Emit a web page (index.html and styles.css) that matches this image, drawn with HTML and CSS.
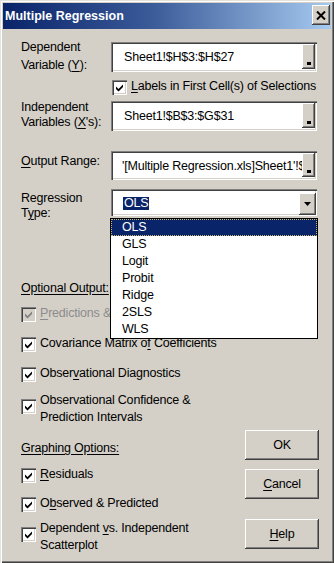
FILE: index.html
```html
<!DOCTYPE html>
<html lang="en">
<head>
    <meta charset="UTF-8">
    <meta name="viewport" content="width=device-width, initial-scale=1.0">
    <title>Multiple Regression</title>
    <link rel="stylesheet" href="styles.css">
</head>
<body>
    <div class="dialog">
        <div class="titlebar">
            <span class="title">Multiple Regression</span>
            <div class="close-btn">
                <svg width="10" height="9" viewBox="0 0 10 9"><path d="M1 0.5 L9 8.5 M9 0.5 L1 8.5" stroke="#000" stroke-width="2"/></svg>
            </div>
        </div>

        <div class="client">
            <div class="field-row row-dep">
                <div class="field-label">Dependent<br>Variable (<u>Y</u>):</div>
                <div class="refedit">
                    <span class="refedit-text">Sheet1!$H$3:$H$27</span>
                    <span class="refedit-btn"><i></i></span>
                </div>
            </div>

            <div class="check-row labels-check">
                <span class="checkbox"><svg width="7" height="8" viewBox="0 0 7 8"><polygon points="0,2.5 2.5,5 7,0.5 7,3 2.5,7.5 0,5"/></svg></span>
                <span><u>L</u>abels in First Cell(s) of Selections</span>
            </div>

            <div class="field-row row-indep">
                <div class="field-label">Independent<br>Variables (<u>X</u>'s):</div>
                <div class="refedit">
                    <span class="refedit-text">Sheet1!$B$3:$G$31</span>
                    <span class="refedit-btn"><i></i></span>
                </div>
            </div>

            <div class="field-row row-output">
                <div class="field-label"><u>O</u>utput Range:</div>
                <div class="refedit">
                    <span class="refedit-text">'[Multiple Regression.xls]Sheet1'!$B$35</span>
                    <span class="refedit-btn"><i></i></span>
                </div>
            </div>

            <div class="field-row row-type">
                <div class="field-label">Regression<br>T<u>y</u>pe:</div>
                <div class="combo">
                    <span class="combo-value">OLS</span>
                    <span class="combo-btn"><svg width="7" height="4" viewBox="0 0 7 4"><polygon points="0,0 7,0 3.5,4"/></svg></span>
                </div>
            </div>

            <div class="lower">
                <div class="options">
                    <div class="section-title">Optional Output:</div>

                    <div class="check-row disabled row-pred">
                        <span class="checkbox"><svg width="7" height="8" viewBox="0 0 7 8"><polygon points="0,2.5 2.5,5 7,0.5 7,3 2.5,7.5 0,5"/></svg></span>
                        <span><u>P</u>redictions &amp; Residuals</span>
                    </div>

                    <div class="check-row row-cov">
                        <span class="checkbox"><svg width="7" height="8" viewBox="0 0 7 8"><polygon points="0,2.5 2.5,5 7,0.5 7,3 2.5,7.5 0,5"/></svg></span>
                        <span>Covariance Matrix o<u>f</u> Coefficients</span>
                    </div>

                    <div class="check-row row-diag">
                        <span class="checkbox"><svg width="7" height="8" viewBox="0 0 7 8"><polygon points="0,2.5 2.5,5 7,0.5 7,3 2.5,7.5 0,5"/></svg></span>
                        <span>Obser<u>v</u>ational Diagnostics</span>
                    </div>

                    <div class="check-row two-line row-conf">
                        <span class="checkbox"><svg width="7" height="8" viewBox="0 0 7 8"><polygon points="0,2.5 2.5,5 7,0.5 7,3 2.5,7.5 0,5"/></svg></span>
                        <span>Observational Confidence &amp;<br>Prediction Intervals</span>
                    </div>

                    <div class="section-title row-graph">Graphing Options:</div>

                    <div class="check-row row-resid">
                        <span class="checkbox"><svg width="7" height="8" viewBox="0 0 7 8"><polygon points="0,2.5 2.5,5 7,0.5 7,3 2.5,7.5 0,5"/></svg></span>
                        <span><u>R</u>esiduals</span>
                    </div>

                    <div class="check-row row-obs">
                        <span class="checkbox"><svg width="7" height="8" viewBox="0 0 7 8"><polygon points="0,2.5 2.5,5 7,0.5 7,3 2.5,7.5 0,5"/></svg></span>
                        <span>O<u>b</u>served &amp; Predicted</span>
                    </div>

                    <div class="check-row two-line row-scatter">
                        <span class="checkbox"><svg width="7" height="8" viewBox="0 0 7 8"><polygon points="0,2.5 2.5,5 7,0.5 7,3 2.5,7.5 0,5"/></svg></span>
                        <span>Dependent <u>v</u>s. Independent<br>Scatterplot</span>
                    </div>
                </div>

                <div class="buttons">
                    <div class="btn">OK</div>
                    <div class="btn btn-cancel"><u>C</u>ancel</div>
                    <div class="btn btn-help"><u>H</u>elp</div>
                </div>
            </div>
        </div>

        <ul class="dropdown">
            <li class="selected">OLS</li>
            <li>GLS</li>
            <li>Logit</li>
            <li>Probit</li>
            <li>Ridge</li>
            <li>2SLS</li>
            <li>WLS</li>
        </ul>
    </div>
</body>
</html>
```

FILE: styles.css
```css
body {
    margin: 0;
    font-family: "Liberation Sans", Arial, sans-serif;
    font-size: 12.5px;
    letter-spacing: -0.2px;
    color: #000;
    background: #d4d0c8;
}

u {
    text-decoration: underline;
    text-underline-offset: 2px;
}

.dialog {
    position: relative;
    width: 334px;
    height: 563px;
    box-sizing: border-box;
    padding: 3px;
    background: #d4d0c8;
    box-shadow: inset 1px 1px #e4e2dc, inset 2px 2px #fff, inset -1px -1px #404040, inset -2px -2px #808080;
}

/* title bar */
.titlebar {
    height: 26px;
    display: flex;
    justify-content: space-between;
    align-items: flex-start;
    padding: 0 1px 0 2px;
    background: linear-gradient(to right, #0a246a, #3a5a98 45%, #a6caf0);
}

.title {
    color: #fff;
    font-weight: bold;
    font-size: 12.5px;
    letter-spacing: 0;
    line-height: 26px;
}

.close-btn {
    margin-top: 2px;
    width: 18px;
    height: 20px;
    display: flex;
    align-items: center;
    justify-content: center;
    background: #d4d0c8;
    box-shadow: inset -1px -1px #404040, inset 1px 1px #fff, inset -2px -2px #808080;
}

/* fields */
.client {
    padding-left: 18px;
}

.field-row {
    display: flex;
    align-items: flex-start;
}

.field-label {
    width: 90px;
    flex: none;
    line-height: 17px;
}

.row-dep { margin-top: 13px; height: 30px; }
.row-dep .field-label { line-height: 18px; margin-top: -4px; }

.row-indep { margin-top: 6px; height: 30px; }
.row-indep .field-label { line-height: 15px; margin-top: -1px; }

.row-output { margin-top: 20px; height: 29px; }
.row-output .field-label { margin-top: 2px; }

.row-type { margin-top: 9px; height: 27px; }
.row-type .field-label { line-height: 15px; margin-top: 2px; }

.refedit {
    width: 206px;
    height: 30px;
    box-sizing: border-box;
    display: flex;
    align-items: center;
    padding: 2px 2px 2px 13px;
    background: #fff;
    box-shadow: inset 1px 1px #808080, inset 2px 2px #404040, inset -1px -1px #fff, inset -2px -2px #d4d0c8;
}

.row-output .refedit { height: 29px; padding-left: 11px; }

.refedit-text {
    flex: 1;
    min-width: 0;
    overflow: hidden;
    white-space: nowrap;
}

.refedit-btn {
    width: 13px;
    align-self: stretch;
    margin-bottom: 1px;
    flex: none;
    display: flex;
    align-items: flex-end;
    justify-content: center;
    padding-bottom: 4px;
    box-sizing: border-box;
    background: #d4d0c8;
    box-shadow: inset -1px -1px #404040, inset 1px 1px #fff, inset -2px -2px #808080;
}

.refedit-btn i {
    display: block;
    width: 4px;
    height: 3px;
    background: #000;
}

.combo {
    width: 206px;
    height: 27px;
    box-sizing: border-box;
    display: flex;
    align-items: center;
    justify-content: space-between;
    padding: 2px 1px 0 12px;
    background: #fff;
    box-shadow: inset 1px 1px #808080, inset 2px 2px #404040, inset -1px -1px #fff, inset -2px -2px #d4d0c8;
}

.combo-value {
    background: #0a246a;
    color: #fff;
    padding: 0 1px;
    line-height: 13px;
}

.combo-btn {
    width: 17px;
    height: 22px;
    display: flex;
    align-items: center;
    justify-content: center;
    background: #d4d0c8;
    box-shadow: inset -1px -1px #404040, inset 1px 1px #fff, inset -2px -2px #808080;
}

/* checkboxes */
.check-row {
    display: flex;
    align-items: flex-start;
    gap: 4px;
    line-height: 17px;
}

.checkbox {
    flex: none;
    width: 15px;
    height: 15px;
    margin-top: 2px;
    box-sizing: border-box;
    display: flex;
    align-items: center;
    justify-content: center;
    background: #fff;
    box-shadow: inset 1px 1px #808080, inset 2px 2px #404040, inset -1px -1px #fff, inset -2px -2px #d4d0c8;
}

.checkbox svg { fill: #000; }

.two-line .checkbox { margin-top: 7px; }

.labels-check {
    margin-top: 6px;
    padding-left: 91px;
}

.disabled { color: #8c8c8c; }
.disabled .checkbox { background: #d4d0c8; }
.disabled .checkbox svg { fill: #808080; }

/* lower part */
.lower {
    display: flex;
    margin-top: 64px;
}

.options {
    flex: 1;
}

.section-title {
    line-height: 17px;
    text-decoration: underline;
    text-underline-offset: 2px;
}

.row-pred { margin-top: 8px; }
.row-cov { margin-top: 13px; }
.row-diag { margin-top: 13px; }
.row-conf { margin-top: 10px; }
.row-graph { margin-top: 14px; }
.row-resid { margin-top: 9px; }
.row-obs { margin-top: 12px; }
.row-scatter { margin-top: 8px; }

.buttons {
    align-self: flex-end;
    width: 74px;
    margin: 0 12px 5px 0;
}

.btn {
    height: 30px;
    display: flex;
    align-items: center;
    justify-content: center;
    background: #d4d0c8;
    box-shadow: inset -1px -1px #404040, inset 1px 1px #fff, inset -2px -2px #808080;
}

.btn-cancel { margin-top: 9px; }
.btn-help { margin-top: 20px; }

/* open combo list */
.dropdown {
    position: absolute;
    left: 110px;
    top: 218px;
    width: 208px;
    box-sizing: border-box;
    margin: 0;
    padding: 0;
    list-style: none;
    background: #fff;
    border: 1px solid #000;
}

.dropdown li {
    line-height: 17px;
    padding-left: 11px;
}

.dropdown .selected {
    background: #0a246a;
    color: #fff;
    outline: 1px dotted #c8b46e;
    outline-offset: -1px;
}
```
